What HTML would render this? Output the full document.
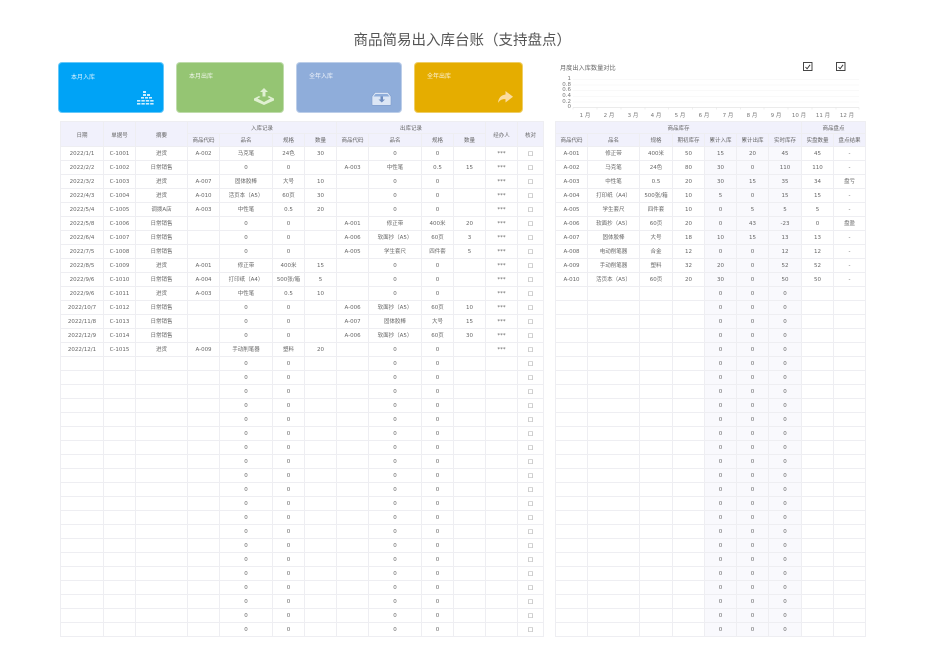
<!DOCTYPE html>
<html lang="zh"><head><meta charset="utf-8"><title>商品简易出入库台账</title>
<style>
html,body{margin:0;padding:0;background:#fff}
body{width:950px;height:672px;position:relative;overflow:hidden;font-family:"DejaVu Sans","Noto Sans CJK SC",sans-serif;color:#666}
.a{position:absolute}
h1{position:absolute;left:353.500px;top:30px;margin:0;white-space:nowrap;font:400 14.500px/20px "Noto Sans CJK SC",sans-serif;color:#555}
.card{position:absolute;top:62px;height:51px;border-radius:4px;box-sizing:border-box;border:1px solid rgba(255,255,255,.4)}
.card span{position:absolute;font-size:6px;line-height:8px;color:#fff;opacity:.85;white-space:nowrap}
table{position:absolute;top:121px;border-collapse:collapse;table-layout:fixed;font-size:5.500px;text-align:center;color:#666}
td,th{border:1px solid #eeeef2;padding:2px 0 0;height:14px;line-height:11px;font-weight:400;box-sizing:border-box;overflow:hidden;white-space:nowrap}
th{background:#f1f1fc;height:12px;line-height:8px;padding-top:3px}
tr.h2 th{height:13px;line-height:10px;padding-top:2px}
.t{background:#f9f9fd}
.lb{position:absolute;font-size:5.500px;line-height:7px;color:#777}
</style></head><body>
<h1>商品简易出入库台账（支持盘点）</h1>

<div class="card" style="left:58px;width:106px;background:#00a3f6"><span style="left:12px;top:11px">本月入库</span></div>
<div class="card" style="left:176px;width:108px;background:#95c573"><span style="left:12px;top:10px">本月出库</span></div>
<div class="card" style="left:296px;width:106px;background:#8fadda"><span style="left:12px;top:10px">全年入库</span></div>
<div class="card" style="left:414px;width:109px;background:#e5ad00"><span style="left:12px;top:10px">全年出库</span></div>

<svg class="a" style="left:0;top:0" width="950" height="120" viewBox="0 0 950 120">
<g fill="#cdeeff">
<rect x="143" y="91" width="3" height="2"/>
<rect x="143" y="94" width="3" height="2"/><rect x="147" y="94" width="3" height="2"/>
<rect x="141" y="97" width="3" height="1.600"/><rect x="145" y="97" width="3" height="1.600"/><rect x="149" y="97" width="3" height="1.600"/>
<rect x="137" y="100" width="3.400" height="1.600"/><rect x="141.400" y="100" width="3.400" height="1.600"/><rect x="145.800" y="100" width="3.400" height="1.600"/><rect x="150.200" y="100" width="3.400" height="1.600"/>
<rect x="137" y="103" width="3.400" height="1.600"/><rect x="141.400" y="103" width="3.400" height="1.600"/><rect x="145.800" y="103" width="3.400" height="1.600"/><rect x="150.200" y="103" width="3.400" height="1.600"/>
</g>
<g fill="#e0f0d2">
<path d="M264 88l4 4h-2.500v4.500h-3v-4.500h-2.500z"/>
<path d="M254 98.500l5-2.500 1.500 1-3 1.500 6.500 3.500 6.500-3.500-3-1.500 1.500-1 5 2.500v2l-10 4.500-10-4.500z"/>
</g>
<g>
<path d="M375 92.500h13l3 4v8a.8.8 0 0 1-.8.8h-17.400a.8.8 0 0 1-.8-.8v-8z" fill="#dce6f5" stroke="#7f9ccb" stroke-width=".6"/>
<path d="M373.500 96.500l2-2.500h12l2 2.500z" fill="#8fadda"/>
<path d="M380.500 96.500h2.500v3h2l-3.200 3-3.300-3h2z" fill="#6f8dc0"/>
</g>
<path d="M505.500 91l7.500 5.800-7.500 5.700v-3.300c-3.500-.2-5.800 1-7.500 3.800.3-4.700 3-8 7.500-8.500z" fill="#fbdca0"/>

<!-- chart -->
<g stroke="#f7f7f7" stroke-width=".7">
<line x1="573" x2="859" y1="79.500" y2="79.500"/><line x1="573" x2="859" y1="85" y2="85"/><line x1="573" x2="859" y1="90.500" y2="90.500"/><line x1="573" x2="859" y1="96.500" y2="96.500"/><line x1="573" x2="859" y1="102" y2="102"/>
</g>
<line x1="573" x2="859" y1="107.500" y2="107.500" stroke="#e4e4e4" stroke-width=".7"/>
<g stroke="#e4e4e4" stroke-width=".6">
<path d="M573 107.500v2M597 107.500v2M621 107.500v2M645 107.500v2M668.500 107.500v2M692.500 107.500v2M716.500 107.500v2M740.500 107.500v2M764 107.500v2M788 107.500v2M812 107.500v2M836 107.500v2M859 107.500v2"/>
</g>
<g fill="none" stroke="#333" stroke-width=".9">
<rect x="803.500" y="62.500" width="8.500" height="8"/>
<rect x="836.500" y="62.500" width="8.500" height="8"/>
<path d="M805.500 67l1.600 1.800 3-4"/><path d="M838.500 67l1.600 1.800 3-4"/>
</g>
</svg>

<div class="a" style="left:560px;top:64px;font-size:6.200px;line-height:8px;color:#666;white-space:nowrap;font-family:'Noto Sans CJK SC',sans-serif">月度出入库数量对比</div>
<div class="lb" style="left:560px;width:11px;text-align:right;top:75.500px">1</div>
<div class="lb" style="left:560px;width:11px;text-align:right;top:81.500px">0.8</div>
<div class="lb" style="left:560px;width:11px;text-align:right;top:87px">0.6</div>
<div class="lb" style="left:560px;width:11px;text-align:right;top:93px">0.4</div>
<div class="lb" style="left:560px;width:11px;text-align:right;top:98.500px">0.2</div>
<div class="lb" style="left:560px;width:11px;text-align:right;top:104px">0</div>
<div class="lb" style="left:575px;width:20px;text-align:center;top:113px">1 月</div>
<div class="lb" style="left:599px;width:20px;text-align:center;top:113px">2 月</div>
<div class="lb" style="left:623px;width:20px;text-align:center;top:113px">3 月</div>
<div class="lb" style="left:646px;width:20px;text-align:center;top:113px">4 月</div>
<div class="lb" style="left:670px;width:20px;text-align:center;top:113px">5 月</div>
<div class="lb" style="left:694px;width:20px;text-align:center;top:113px">6 月</div>
<div class="lb" style="left:718px;width:20px;text-align:center;top:113px">7 月</div>
<div class="lb" style="left:742px;width:20px;text-align:center;top:113px">8 月</div>
<div class="lb" style="left:766px;width:20px;text-align:center;top:113px">9 月</div>
<div class="lb" style="left:789px;width:20px;text-align:center;top:113px">10 月</div>
<div class="lb" style="left:813px;width:20px;text-align:center;top:113px">11 月</div>
<div class="lb" style="left:837px;width:20px;text-align:center;top:113px">12 月</div>

<table style="left:60px;width:483px">
<colgroup><col style="width:43px"><col style="width:32px"><col style="width:52px"><col style="width:32px"><col style="width:53px"><col style="width:32px"><col style="width:32px"><col style="width:32px"><col style="width:53px"><col style="width:32px"><col style="width:32px"><col style="width:32px"><col style="width:26px"></colgroup>
<tr><th rowspan="2">日期</th><th rowspan="2">单据号</th><th rowspan="2">摘要</th><th colspan="4">入库记录</th><th colspan="4">出库记录</th><th rowspan="2">经办人</th><th rowspan="2">核对</th></tr>
<tr class="h2"><th>商品代码</th><th>品名</th><th>规格</th><th>数量</th><th>商品代码</th><th>品名</th><th>规格</th><th>数量</th></tr>
<tr><td>2022/1/1</td><td>C-1001</td><td>进货</td><td>A-002</td><td>马克笔</td><td>24色</td><td>30</td><td></td><td>0</td><td>0</td><td></td><td>***</td><td>□</td></tr>
<tr><td>2022/2/2</td><td>C-1002</td><td>日常销售</td><td></td><td>0</td><td>0</td><td></td><td>A-003</td><td>中性笔</td><td>0.5</td><td>15</td><td>***</td><td>□</td></tr>
<tr><td>2022/3/2</td><td>C-1003</td><td>进货</td><td>A-007</td><td>固体胶棒</td><td>大号</td><td>10</td><td></td><td>0</td><td>0</td><td></td><td>***</td><td>□</td></tr>
<tr><td>2022/4/3</td><td>C-1004</td><td>进货</td><td>A-010</td><td>活页本（A5）</td><td>60页</td><td>30</td><td></td><td>0</td><td>0</td><td></td><td>***</td><td>□</td></tr>
<tr><td>2022/5/4</td><td>C-1005</td><td>调拨A店</td><td>A-003</td><td>中性笔</td><td>0.5</td><td>20</td><td></td><td>0</td><td>0</td><td></td><td>***</td><td>□</td></tr>
<tr><td>2022/5/8</td><td>C-1006</td><td>日常销售</td><td></td><td>0</td><td>0</td><td></td><td>A-001</td><td>修正带</td><td>400米</td><td>20</td><td>***</td><td>□</td></tr>
<tr><td>2022/6/4</td><td>C-1007</td><td>日常销售</td><td></td><td>0</td><td>0</td><td></td><td>A-006</td><td>软面抄（A5）</td><td>60页</td><td>3</td><td>***</td><td>□</td></tr>
<tr><td>2022/7/5</td><td>C-1008</td><td>日常销售</td><td></td><td>0</td><td>0</td><td></td><td>A-005</td><td>学生套尺</td><td>四件套</td><td>5</td><td>***</td><td>□</td></tr>
<tr><td>2022/8/5</td><td>C-1009</td><td>进货</td><td>A-001</td><td>修正带</td><td>400米</td><td>15</td><td></td><td>0</td><td>0</td><td></td><td>***</td><td>□</td></tr>
<tr><td>2022/9/6</td><td>C-1010</td><td>日常销售</td><td>A-004</td><td>打印纸（A4）</td><td>500张/箱</td><td>5</td><td></td><td>0</td><td>0</td><td></td><td>***</td><td>□</td></tr>
<tr><td>2022/9/6</td><td>C-1011</td><td>进货</td><td>A-003</td><td>中性笔</td><td>0.5</td><td>10</td><td></td><td>0</td><td>0</td><td></td><td>***</td><td>□</td></tr>
<tr><td>2022/10/7</td><td>C-1012</td><td>日常销售</td><td></td><td>0</td><td>0</td><td></td><td>A-006</td><td>软面抄（A5）</td><td>60页</td><td>10</td><td>***</td><td>□</td></tr>
<tr><td>2022/11/8</td><td>C-1013</td><td>日常销售</td><td></td><td>0</td><td>0</td><td></td><td>A-007</td><td>固体胶棒</td><td>大号</td><td>15</td><td>***</td><td>□</td></tr>
<tr><td>2022/12/9</td><td>C-1014</td><td>日常销售</td><td></td><td>0</td><td>0</td><td></td><td>A-006</td><td>软面抄（A5）</td><td>60页</td><td>30</td><td>***</td><td>□</td></tr>
<tr><td>2022/12/1</td><td>C-1015</td><td>进货</td><td>A-009</td><td>手动削笔器</td><td>塑料</td><td>20</td><td></td><td>0</td><td>0</td><td></td><td>***</td><td>□</td></tr>
<tr><td></td><td></td><td></td><td></td><td>0</td><td>0</td><td></td><td></td><td>0</td><td>0</td><td></td><td></td><td>□</td></tr>
<tr><td></td><td></td><td></td><td></td><td>0</td><td>0</td><td></td><td></td><td>0</td><td>0</td><td></td><td></td><td>□</td></tr>
<tr><td></td><td></td><td></td><td></td><td>0</td><td>0</td><td></td><td></td><td>0</td><td>0</td><td></td><td></td><td>□</td></tr>
<tr><td></td><td></td><td></td><td></td><td>0</td><td>0</td><td></td><td></td><td>0</td><td>0</td><td></td><td></td><td>□</td></tr>
<tr><td></td><td></td><td></td><td></td><td>0</td><td>0</td><td></td><td></td><td>0</td><td>0</td><td></td><td></td><td>□</td></tr>
<tr><td></td><td></td><td></td><td></td><td>0</td><td>0</td><td></td><td></td><td>0</td><td>0</td><td></td><td></td><td>□</td></tr>
<tr><td></td><td></td><td></td><td></td><td>0</td><td>0</td><td></td><td></td><td>0</td><td>0</td><td></td><td></td><td>□</td></tr>
<tr><td></td><td></td><td></td><td></td><td>0</td><td>0</td><td></td><td></td><td>0</td><td>0</td><td></td><td></td><td>□</td></tr>
<tr><td></td><td></td><td></td><td></td><td>0</td><td>0</td><td></td><td></td><td>0</td><td>0</td><td></td><td></td><td>□</td></tr>
<tr><td></td><td></td><td></td><td></td><td>0</td><td>0</td><td></td><td></td><td>0</td><td>0</td><td></td><td></td><td>□</td></tr>
<tr><td></td><td></td><td></td><td></td><td>0</td><td>0</td><td></td><td></td><td>0</td><td>0</td><td></td><td></td><td>□</td></tr>
<tr><td></td><td></td><td></td><td></td><td>0</td><td>0</td><td></td><td></td><td>0</td><td>0</td><td></td><td></td><td>□</td></tr>
<tr><td></td><td></td><td></td><td></td><td>0</td><td>0</td><td></td><td></td><td>0</td><td>0</td><td></td><td></td><td>□</td></tr>
<tr><td></td><td></td><td></td><td></td><td>0</td><td>0</td><td></td><td></td><td>0</td><td>0</td><td></td><td></td><td>□</td></tr>
<tr><td></td><td></td><td></td><td></td><td>0</td><td>0</td><td></td><td></td><td>0</td><td>0</td><td></td><td></td><td>□</td></tr>
<tr><td></td><td></td><td></td><td></td><td>0</td><td>0</td><td></td><td></td><td>0</td><td>0</td><td></td><td></td><td>□</td></tr>
<tr><td></td><td></td><td></td><td></td><td>0</td><td>0</td><td></td><td></td><td>0</td><td>0</td><td></td><td></td><td>□</td></tr>
<tr><td></td><td></td><td></td><td></td><td>0</td><td>0</td><td></td><td></td><td>0</td><td>0</td><td></td><td></td><td>□</td></tr>
<tr><td></td><td></td><td></td><td></td><td>0</td><td>0</td><td></td><td></td><td>0</td><td>0</td><td></td><td></td><td>□</td></tr>
<tr><td></td><td></td><td></td><td></td><td>0</td><td>0</td><td></td><td></td><td>0</td><td>0</td><td></td><td></td><td>□</td></tr>
</table>

<table style="left:555px;width:310px">
<colgroup><col style="width:32px"><col style="width:52px"><col style="width:33px"><col style="width:32px"><col style="width:32px" class="t"><col style="width:32px" class="t"><col style="width:33px" class="t"><col style="width:32px"><col style="width:32px"></colgroup>
<tr><th colspan="7">商品库存</th><th colspan="2">商品盘点</th></tr>
<tr class="h2"><th>商品代码</th><th>品名</th><th>规格</th><th>期初库存</th><th>累计入库</th><th>累计出库</th><th>实时库存</th><th>实盘数量</th><th>盘点结果</th></tr>
<tr><td>A-001</td><td>修正带</td><td>400米</td><td>50</td><td>15</td><td>20</td><td>45</td><td>45</td><td>-</td></tr>
<tr><td>A-002</td><td>马克笔</td><td>24色</td><td>80</td><td>30</td><td>0</td><td>110</td><td>110</td><td>-</td></tr>
<tr><td>A-003</td><td>中性笔</td><td>0.5</td><td>20</td><td>30</td><td>15</td><td>35</td><td>34</td><td>盘亏</td></tr>
<tr><td>A-004</td><td>打印纸（A4）</td><td>500张/箱</td><td>10</td><td>5</td><td>0</td><td>15</td><td>15</td><td>-</td></tr>
<tr><td>A-005</td><td>学生套尺</td><td>四件套</td><td>10</td><td>0</td><td>5</td><td>5</td><td>5</td><td>-</td></tr>
<tr><td>A-006</td><td>软面抄（A5）</td><td>60页</td><td>20</td><td>0</td><td>43</td><td>-23</td><td>0</td><td>盘盈</td></tr>
<tr><td>A-007</td><td>固体胶棒</td><td>大号</td><td>18</td><td>10</td><td>15</td><td>13</td><td>13</td><td>-</td></tr>
<tr><td>A-008</td><td>电动削笔器</td><td>合金</td><td>12</td><td>0</td><td>0</td><td>12</td><td>12</td><td>-</td></tr>
<tr><td>A-009</td><td>手动削笔器</td><td>塑料</td><td>32</td><td>20</td><td>0</td><td>52</td><td>52</td><td>-</td></tr>
<tr><td>A-010</td><td>活页本（A5）</td><td>60页</td><td>20</td><td>30</td><td>0</td><td>50</td><td>50</td><td>-</td></tr>
<tr><td></td><td></td><td></td><td></td><td>0</td><td>0</td><td>0</td><td></td><td></td></tr>
<tr><td></td><td></td><td></td><td></td><td>0</td><td>0</td><td>0</td><td></td><td></td></tr>
<tr><td></td><td></td><td></td><td></td><td>0</td><td>0</td><td>0</td><td></td><td></td></tr>
<tr><td></td><td></td><td></td><td></td><td>0</td><td>0</td><td>0</td><td></td><td></td></tr>
<tr><td></td><td></td><td></td><td></td><td>0</td><td>0</td><td>0</td><td></td><td></td></tr>
<tr><td></td><td></td><td></td><td></td><td>0</td><td>0</td><td>0</td><td></td><td></td></tr>
<tr><td></td><td></td><td></td><td></td><td>0</td><td>0</td><td>0</td><td></td><td></td></tr>
<tr><td></td><td></td><td></td><td></td><td>0</td><td>0</td><td>0</td><td></td><td></td></tr>
<tr><td></td><td></td><td></td><td></td><td>0</td><td>0</td><td>0</td><td></td><td></td></tr>
<tr><td></td><td></td><td></td><td></td><td>0</td><td>0</td><td>0</td><td></td><td></td></tr>
<tr><td></td><td></td><td></td><td></td><td>0</td><td>0</td><td>0</td><td></td><td></td></tr>
<tr><td></td><td></td><td></td><td></td><td>0</td><td>0</td><td>0</td><td></td><td></td></tr>
<tr><td></td><td></td><td></td><td></td><td>0</td><td>0</td><td>0</td><td></td><td></td></tr>
<tr><td></td><td></td><td></td><td></td><td>0</td><td>0</td><td>0</td><td></td><td></td></tr>
<tr><td></td><td></td><td></td><td></td><td>0</td><td>0</td><td>0</td><td></td><td></td></tr>
<tr><td></td><td></td><td></td><td></td><td>0</td><td>0</td><td>0</td><td></td><td></td></tr>
<tr><td></td><td></td><td></td><td></td><td>0</td><td>0</td><td>0</td><td></td><td></td></tr>
<tr><td></td><td></td><td></td><td></td><td>0</td><td>0</td><td>0</td><td></td><td></td></tr>
<tr><td></td><td></td><td></td><td></td><td>0</td><td>0</td><td>0</td><td></td><td></td></tr>
<tr><td></td><td></td><td></td><td></td><td>0</td><td>0</td><td>0</td><td></td><td></td></tr>
<tr><td></td><td></td><td></td><td></td><td>0</td><td>0</td><td>0</td><td></td><td></td></tr>
<tr><td></td><td></td><td></td><td></td><td>0</td><td>0</td><td>0</td><td></td><td></td></tr>
<tr><td></td><td></td><td></td><td></td><td>0</td><td>0</td><td>0</td><td></td><td></td></tr>
<tr><td></td><td></td><td></td><td></td><td>0</td><td>0</td><td>0</td><td></td><td></td></tr>
<tr><td></td><td></td><td></td><td></td><td>0</td><td>0</td><td>0</td><td></td><td></td></tr>
</table>
</body></html>
